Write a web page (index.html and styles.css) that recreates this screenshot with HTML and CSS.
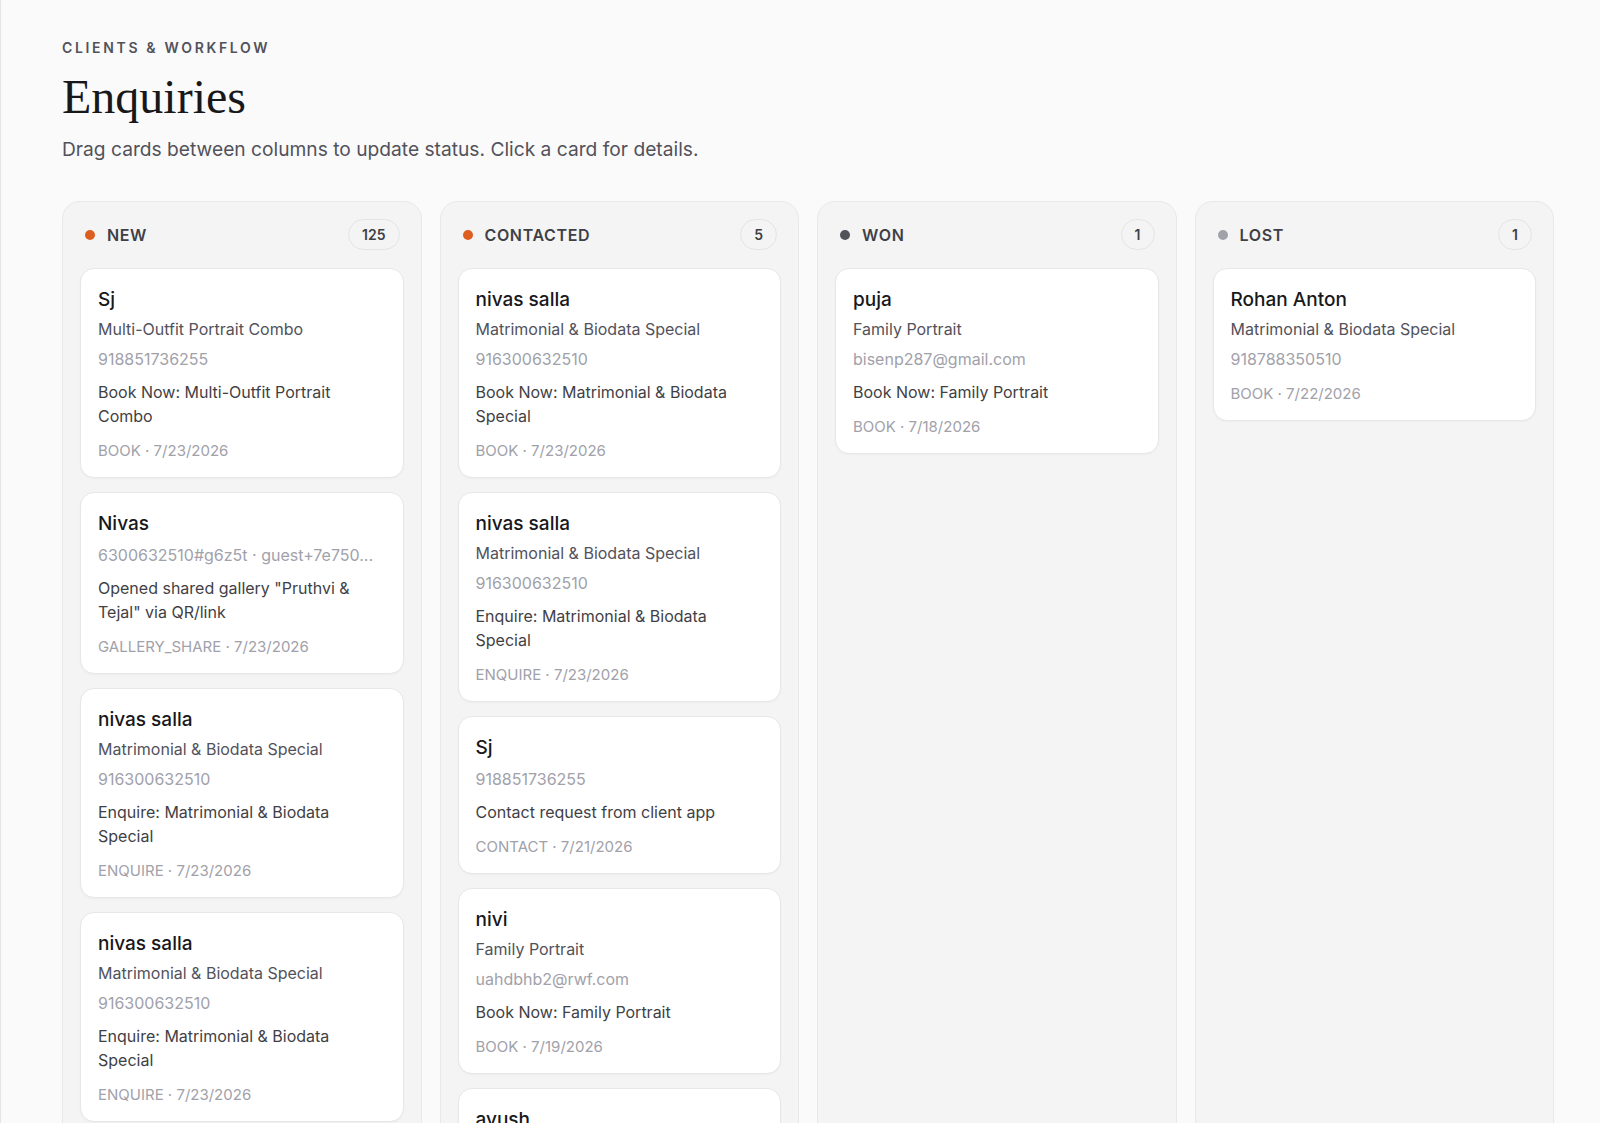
FILE: index.html
```html
<!DOCTYPE html>
<html lang="en">
<head>
  <meta charset="UTF-8">
  <meta name="viewport" content="width=device-width, initial-scale=1.0">
  <title>Enquiries</title>
  <link rel="stylesheet" href="styles.css">
</head>
<body>
  <main class="page">
    <header class="page-head">
      <p class="eyebrow">Clients &amp; Workflow</p>
      <h1>Enquiries</h1>
      <p class="lead">Drag cards between columns to update status. Click a card for details.</p>
    </header>

    <div class="board">
      <section class="column">
        <div class="column-head">
          <span class="dot dot-new"></span>
          <h2>New</h2>
          <span class="count">125</span>
        </div>
        <div class="cards">
          <article class="card">
            <h3>Sj</h3>
            <p class="service">Multi-Outfit Portrait Combo</p>
            <p class="contact">918851736255</p>
            <p class="message">Book Now: Multi-Outfit Portrait Combo</p>
            <p class="meta">BOOK · 7/23/2026</p>
          </article>
          <article class="card">
            <h3>Nivas</h3>
            <p class="contact">6300632510#g6z5t · guest+7e750...</p>
            <p class="message">Opened shared gallery "Pruthvi &amp; Tejal" via QR/link</p>
            <p class="meta">GALLERY_SHARE · 7/23/2026</p>
          </article>
          <article class="card">
            <h3>nivas salla</h3>
            <p class="service">Matrimonial &amp; Biodata Special</p>
            <p class="contact">916300632510</p>
            <p class="message">Enquire: Matrimonial &amp; Biodata Special</p>
            <p class="meta">ENQUIRE · 7/23/2026</p>
          </article>
          <article class="card">
            <h3>nivas salla</h3>
            <p class="service">Matrimonial &amp; Biodata Special</p>
            <p class="contact">916300632510</p>
            <p class="message">Enquire: Matrimonial &amp; Biodata Special</p>
            <p class="meta">ENQUIRE · 7/23/2026</p>
          </article>
          <article class="card">
            <h3>Sj</h3>
            <p class="service">Family Portrait</p>
            <p class="contact">918851736255</p>
            <p class="message">Book Now: Family Portrait</p>
            <p class="meta">BOOK · 7/22/2026</p>
          </article>
        </div>
      </section>

      <section class="column">
        <div class="column-head">
          <span class="dot dot-contacted"></span>
          <h2>Contacted</h2>
          <span class="count">5</span>
        </div>
        <div class="cards">
          <article class="card">
            <h3>nivas salla</h3>
            <p class="service">Matrimonial &amp; Biodata Special</p>
            <p class="contact">916300632510</p>
            <p class="message">Book Now: Matrimonial &amp; Biodata Special</p>
            <p class="meta">BOOK · 7/23/2026</p>
          </article>
          <article class="card">
            <h3>nivas salla</h3>
            <p class="service">Matrimonial &amp; Biodata Special</p>
            <p class="contact">916300632510</p>
            <p class="message">Enquire: Matrimonial &amp; Biodata Special</p>
            <p class="meta">ENQUIRE · 7/23/2026</p>
          </article>
          <article class="card">
            <h3>Sj</h3>
            <p class="contact">918851736255</p>
            <p class="message">Contact request from client app</p>
            <p class="meta">CONTACT · 7/21/2026</p>
          </article>
          <article class="card">
            <h3>nivi</h3>
            <p class="service">Family Portrait</p>
            <p class="contact">uahdbhb2@rwf.com</p>
            <p class="message">Book Now: Family Portrait</p>
            <p class="meta">BOOK · 7/19/2026</p>
          </article>
          <article class="card">
            <h3>ayush</h3>
            <p class="service">Family Portrait</p>
            <p class="contact">918123456789</p>
            <p class="message">Book Now: Family Portrait</p>
            <p class="meta">BOOK · 7/17/2026</p>
          </article>
        </div>
      </section>

      <section class="column">
        <div class="column-head">
          <span class="dot dot-won"></span>
          <h2>Won</h2>
          <span class="count">1</span>
        </div>
        <div class="cards">
          <article class="card">
            <h3>puja</h3>
            <p class="service">Family Portrait</p>
            <p class="contact">bisenp287@gmail.com</p>
            <p class="message">Book Now: Family Portrait</p>
            <p class="meta">BOOK · 7/18/2026</p>
          </article>
        </div>
      </section>

      <section class="column">
        <div class="column-head">
          <span class="dot dot-lost"></span>
          <h2>Lost</h2>
          <span class="count">1</span>
        </div>
        <div class="cards">
          <article class="card">
            <h3>Rohan Anton</h3>
            <p class="service">Matrimonial &amp; Biodata Special</p>
            <p class="contact">918788350510</p>
            <p class="meta">BOOK · 7/22/2026</p>
          </article>
        </div>
      </section>
    </div>
  </main>
</body>
</html>
```

FILE: styles.css
```css
body {
  margin: 0;
  background: #fafafa;
  font-family: Inter, 'Noto Sans', sans-serif;
  color: #18181b;
}

.page {
  min-height: 100vh;
  border-left: 1px solid #e4e4e7;
  padding: 40px 46px 0 61px;
  box-sizing: border-box;
}

.page-head p,
.page-head h1 {
  margin: 0;
}

.eyebrow {
  font-size: 14px;
  line-height: 16px;
  font-weight: 600;
  letter-spacing: 0.19em;
  text-transform: uppercase;
  color: #52525b;
}

.page-head h1 {
  margin-top: 15px;
  font-family: 'Liberation Serif', serif;
  font-size: 48px;
  line-height: 52px;
  font-weight: 400;
  color: #18181b;
}

.page-head .lead {
  margin-top: 13px;
  font-size: 19.2px;
  line-height: 26px;
  color: #52525b;
}

.board {
  display: grid;
  grid-template-columns: repeat(4, minmax(0, 1fr));
  gap: 18px;
  margin-top: 39px;
  align-items: stretch;
}

.column {
  min-width: 0;
  background: #f4f4f4;
  border: 1px solid #e8e8e8;
  border-radius: 18px;
  padding: 17px 17px 18px;
}

.column-head {
  display: flex;
  align-items: center;
  height: 31px;
  padding: 0 4px 0 5px;
  margin-bottom: 18px;
}

.dot {
  width: 10px;
  height: 10px;
  border-radius: 50%;
  margin-right: 12px;
}

.dot-new, .dot-contacted { background: #dd5e1f; }
.dot-won { background: #52525b; }
.dot-lost { background: #a1a1aa; }

.column-head h2 {
  margin: 0;
  flex: 1;
  font-size: 16px;
  font-weight: 600;
  letter-spacing: 0.04em;
  text-transform: uppercase;
  color: #3f3f46;
}

.count {
  min-width: 34px;
  height: 31px;
  box-sizing: border-box;
  padding: 0 13px;
  border: 1px solid #e4e4e7;
  border-radius: 999px;
  display: flex;
  align-items: center;
  justify-content: center;
  font-size: 14px;
  font-weight: 600;
  color: #3f3f46;
}

.cards {
  display: flex;
  flex-direction: column;
  gap: 14px;
}

.card {
  background: #fff;
  border: 1px solid #e7e7e7;
  border-radius: 14px;
  padding: 18px 17px 16px;
  box-shadow: 0 1px 2px rgba(0, 0, 0, 0.03);
}

.card h3 {
  margin: 0;
  font-size: 19px;
  line-height: 26px;
  font-weight: 500;
  color: #18181b;
}

.card p {
  margin: 0;
  font-size: 16px;
  line-height: 24px;
}

.card .service {
  margin-top: 4px;
  color: #52525b;
}

.card .contact {
  margin-top: 6px;
  color: #a1a1aa;
  white-space: nowrap;
  overflow: hidden;
  text-overflow: ellipsis;
}

.card .message {
  margin-top: 9px;
  color: #3f3f46;
}

.card .meta {
  margin-top: 13px;
  font-size: 15px;
  line-height: 20px;
  color: #a1a1aa;
}
```
